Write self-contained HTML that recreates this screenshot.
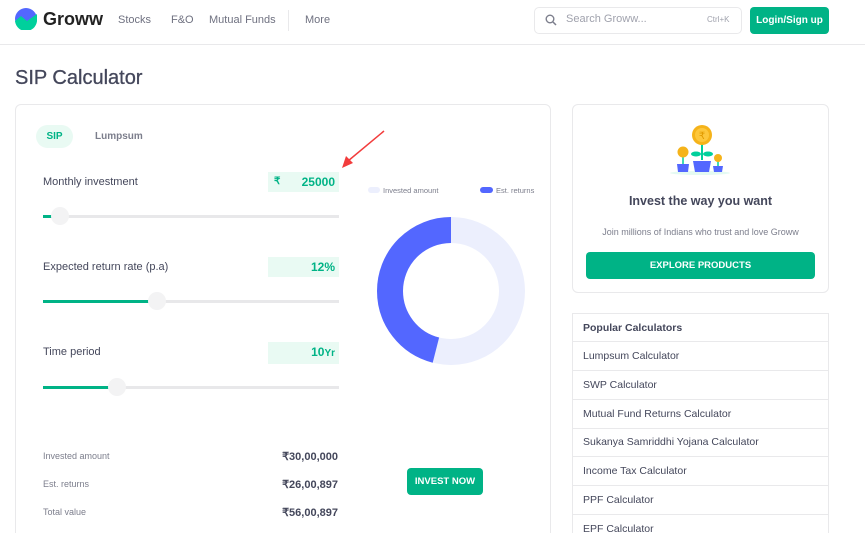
<!DOCTYPE html>
<html><head><meta charset="utf-8"><style>
*{box-sizing:border-box;margin:0;padding:0}
html,body{width:865px;height:533px;overflow:hidden}
body{background:#fff;font-family:"Liberation Sans",Arial,sans-serif;color:#44475b;position:relative}
.a{position:absolute;white-space:nowrap}
.hdr{position:absolute;left:0;top:0;width:865px;height:45px;border-bottom:1px solid #e9e9eb}
.nav{font-size:11px;color:#6f7180;top:14px}
.card{position:absolute;border:1px solid #e9e9eb;border-radius:6px}
.lbl{font-size:11px;color:#44475b}
.box{position:absolute;background:#e9faf3;color:#00b386;font-weight:bold;font-size:12px;text-align:right;padding-right:4px;line-height:20px}
.track{position:absolute;left:43px;width:296px;height:3px;background:#e8e8ea}
.fill{position:absolute;left:0;top:0;height:3px;background:#00b386}
.thumb{position:absolute;width:18px;height:18px;border-radius:50%;background:#f3f3f4;top:-8px;margin-left:-9px}
.row{position:absolute;left:572px;width:257px;height:29px;border:1px solid #e9e9eb;border-top:none;font-size:10.5px;line-height:28px;padding-left:10px;color:#44475b}
.sm{font-size:9px;color:#7c7e8c}
.val{font-size:11px;font-weight:bold;color:#44475b;right:527px}
</style></head><body>
<div class="hdr"></div>
<svg class="a" style="left:15px;top:8px" width="22" height="22" viewBox="0 0 22 22"><circle cx="11" cy="11" r="11" fill="#5367ff"/><path d="M0 13 L6 8 L12 13 L22 6 L22 11 A11 11 0 0 1 0 13Z" fill="#00d09c"/></svg>
<div class="a" style="left:43px;top:9px;font-size:18px;font-weight:bold;color:#222">Groww</div>
<div class="a nav" style="left:118px">Stocks</div>
<div class="a nav" style="left:171px">F&amp;O</div>
<div class="a nav" style="left:209px">Mutual Funds</div>
<div class="a" style="left:288px;top:10px;width:1px;height:21px;background:#e9e9eb"></div>
<div class="a nav" style="left:305px">More</div>
<div class="a" style="left:534px;top:7px;width:208px;height:27px;border:1px solid #e9e9eb;border-radius:5px"></div>
<svg class="a" style="left:545px;top:14px" width="12" height="12" viewBox="0 0 12 12"><circle cx="5" cy="5" r="3.8" fill="none" stroke="#7c7e8c" stroke-width="1.4"/><path d="M8 8L11 11" stroke="#7c7e8c" stroke-width="1.5"/></svg>
<div class="a" style="left:566px;top:13px;font-size:11px;color:#a0a2ad">Search Groww...</div>
<div class="a" style="left:707px;top:15px;font-size:8px;color:#a0a2ad">Ctrl+K</div>
<div class="a" style="left:750px;top:7px;width:79px;height:27px;background:#00b386;border-radius:4px;color:#fff;font-size:10px;font-weight:bold;text-align:center;line-height:27px">Login/Sign up</div>
<div class="a" style="left:15px;top:67px;font-size:20px;color:#44475b;-webkit-text-stroke:0.3px #44475b">SIP Calculator</div>

<div class="card" style="left:15px;top:104px;width:536px;height:440px"></div>
<div class="a" style="left:36px;top:125px;width:37px;height:23px;border-radius:12px;background:#e9faf3;color:#00b386;font-size:10px;font-weight:bold;text-align:center;line-height:23px">SIP</div>
<div class="a" style="left:95px;top:131px;font-size:10px;font-weight:bold;color:#7c7e8c">Lumpsum</div>

<div class="a lbl" style="left:43px;top:176px">Monthly investment</div>
<div class="box" style="left:268px;top:172px;width:71px"><span style="float:left;padding-left:6px;font-size:10px">₹</span>25000</div>
<div class="track" style="top:215px"><div class="fill" style="width:17px"></div><div class="thumb" style="left:17px"></div></div>

<div class="a lbl" style="left:43px;top:261px">Expected return rate (p.a)</div>
<div class="box" style="left:268px;top:257px;width:71px">12%</div>
<div class="track" style="top:300px"><div class="fill" style="width:114px"></div><div class="thumb" style="left:114px"></div></div>

<div class="a lbl" style="left:43px;top:346px">Time period</div>
<div class="box" style="left:268px;top:342px;width:71px">10<span style="font-size:10px">Yr</span></div>
<div class="track" style="top:386px"><div class="fill" style="width:74px"></div><div class="thumb" style="left:74px"></div></div>

<div class="a sm" style="left:43px;top:451px">Invested amount</div>
<div class="a val" style="top:450px">₹30,00,000</div>
<div class="a sm" style="left:43px;top:479px">Est. returns</div>
<div class="a val" style="top:478px">₹26,00,897</div>
<div class="a sm" style="left:43px;top:507px">Total value</div>
<div class="a val" style="top:506px">₹56,00,897</div>

<svg class="a" style="left:330px;top:125px" width="60" height="50" viewBox="0 0 60 50"><path d="M54 6 L18 36" stroke="#f23c3c" stroke-width="1.5"/><path d="M12 43 L16 31 L23 38Z" fill="#f23c3c"/></svg>

<div class="a" style="left:368px;top:187px;width:12px;height:6px;border-radius:3px;background:#eceffd"></div>
<div class="a" style="left:383px;top:186px;font-size:7.5px;color:#7c7e8c">Invested amount</div>
<div class="a" style="left:480px;top:187px;width:13px;height:6px;border-radius:3px;background:#5367ff"></div>
<div class="a" style="left:496px;top:186px;font-size:7.5px;color:#7c7e8c">Est. returns</div>
<svg class="a" style="left:377px;top:217px" width="148" height="148" viewBox="0 0 148 148"><circle cx="74" cy="74" r="61" fill="none" stroke="#eceffd" stroke-width="26"/><circle cx="74" cy="74" r="61" fill="none" stroke="#5367ff" stroke-width="26" stroke-dasharray="176.3 400" transform="translate(148 0) scale(-1 1) rotate(-90 74 74)"/></svg>
<div class="a" style="left:407px;top:468px;width:76px;height:27px;background:#00b386;border-radius:4px;color:#fff;font-size:9.5px;font-weight:bold;text-align:center;line-height:27px">INVEST NOW</div>

<div class="card" style="left:572px;top:104px;width:257px;height:189px"></div>
<svg class="a" style="left:668px;top:124px" width="64" height="52" viewBox="0 0 64 52"><ellipse cx="32" cy="49" rx="30" ry="2" fill="#e4faf2"/><line x1="34" y1="20" x2="34" y2="36" stroke="#00d09c" stroke-width="2"/><ellipse cx="28" cy="30" rx="5" ry="2.5" fill="#00d09c"/><ellipse cx="40" cy="30" rx="5" ry="2.5" fill="#00d09c"/><circle cx="34" cy="11" r="10" fill="#f5b31a"/><circle cx="34" cy="11" r="7" fill="#fdc73c"/><text x="34" y="15" font-size="10" text-anchor="middle" fill="#e09a00" font-family="Liberation Sans">₹</text><path d="M25 37H43L41 48H27Z" fill="#5367ff"/><line x1="15" y1="30" x2="15" y2="40" stroke="#00d09c" stroke-width="1.5"/><circle cx="15" cy="28" r="5.5" fill="#f5b31a"/><path d="M9 40H21L20 48H10Z" fill="#5367ff"/><line x1="50" y1="36" x2="50" y2="42" stroke="#00d09c" stroke-width="1.5"/><circle cx="50" cy="34" r="4" fill="#f5b31a"/><path d="M45 42H55L54 48H46Z" fill="#5367ff"/></svg>
<div class="a" style="left:572px;top:194px;width:257px;text-align:center;font-size:12.5px;font-weight:bold;color:#44475b">Invest the way you want</div>
<div class="a" style="left:572px;top:227px;width:257px;text-align:center;font-size:9px;color:#7c7e8c">Join millions of Indians who trust and love Groww</div>
<div class="a" style="left:586px;top:252px;width:229px;height:27px;background:#00b386;border-radius:4px;color:#fff;font-size:9.5px;font-weight:bold;text-align:center;line-height:27px">EXPLORE PRODUCTS</div>

<div class="row" style="top:313px;border-top:1px solid #e9e9eb;font-weight:bold;height:29px">Popular Calculators</div>
<div class="row" style="top:342px">Lumpsum Calculator</div>
<div class="row" style="top:371px">SWP Calculator</div>
<div class="row" style="top:400px">Mutual Fund Returns Calculator</div>
<div class="row" style="top:428px">Sukanya Samriddhi Yojana Calculator</div>
<div class="row" style="top:457px">Income Tax Calculator</div>
<div class="row" style="top:486px">PPF Calculator</div>
<div class="row" style="top:515px">EPF Calculator</div>
</body></html>
